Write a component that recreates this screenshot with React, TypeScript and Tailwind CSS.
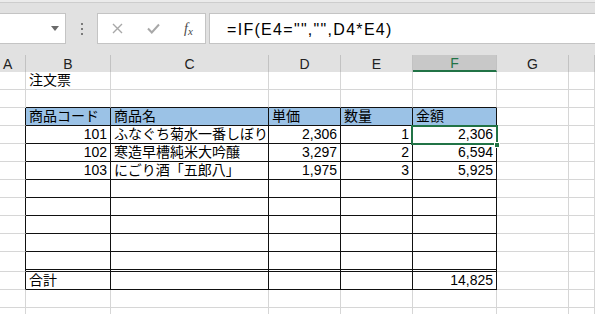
import React from "react";

const FONT = "font-['Liberation_Sans','Noto_Sans_CJK_JP',sans-serif]";

type Cell = { t?: string; r?: boolean };

const colWidths = [26, 85, 158, 72, 72, 84, 72];

const rows: { cells: Cell[]; kind: string }[] = [
  { kind: "plain", cells: [{}, { t: "注文票" }] },
  { kind: "pre", cells: [] },
  {
    kind: "head",
    cells: [{}, { t: "商品コード" }, { t: "商品名" }, { t: "単価" }, { t: "数量" }, { t: "金額" }],
  },
  {
    kind: "tbl",
    cells: [{}, { t: "101", r: true }, { t: "ふなぐち菊水一番しぼり" }, { t: "2,306", r: true }, { t: "1", r: true }, { t: "2,306", r: true }],
  },
  {
    kind: "tbl",
    cells: [{}, { t: "102", r: true }, { t: "寒造早槽純米大吟醸" }, { t: "3,297", r: true }, { t: "2", r: true }, { t: "6,594", r: true }],
  },
  {
    kind: "tbl",
    cells: [{}, { t: "103", r: true }, { t: "にごり酒「五郎八」" }, { t: "1,975", r: true }, { t: "3", r: true }, { t: "5,925", r: true }],
  },
  { kind: "tbl", cells: [] },
  { kind: "tbl", cells: [] },
  { kind: "tbl", cells: [] },
  { kind: "tbl", cells: [] },
  { kind: "last", cells: [] },
  {
    kind: "total",
    cells: [{}, { t: "合計" }, {}, {}, {}, { t: "14,825", r: true }],
  },
  { kind: "plain", cells: [] },
  { kind: "plain", cells: [] },
];

function GridRow({ row }: { row: { cells: Cell[]; kind: string } }) {
  const inTable = ["head", "tbl", "last", "total"].includes(row.kind);
  const h = row.kind === "last" ? "h-[20px]" : "h-[18px]";
  return (
    <div className={`flex ${h}`}>
      {Array.from({ length: 8 }).map((_, ci) => {
        const c = row.cells[ci] || {};
        const tableCol = ci >= 1 && ci <= 5;
        let br = "border-r border-r-[#d6d6d6]";
        let bb = "border-b border-b-[#d6d6d6]";
        if (inTable && ci <= 5) br = "border-r border-r-[#111]";
        if (row.kind === "pre" && tableCol) bb = "border-b border-b-[#111]";
        if (inTable && tableCol) bb = "border-b border-b-[#111]";
        if (row.kind === "last" && tableCol) bb = "border-b-[3px] border-double border-b-[#111]";
        const bg = row.kind === "head" && tableCol ? "bg-[#9bc2e6]" : "bg-white";
        const w = ci < 7 ? colWidths[ci] : undefined;
        return (
          <div
            key={ci}
            className={`${br} ${bb} ${bg} ${ci === 7 ? "flex-1" : "shrink-0"} flex items-end overflow-hidden whitespace-nowrap px-[3px] pb-[1px] text-[14px] leading-[16px] text-black ${c.r ? "justify-end" : "justify-start"}`}
            style={w ? { width: w } : undefined}
          >
            {c.t}
          </div>
        );
      })}
    </div>
  );
}

export default function App() {
  const headers = ["A", "B", "C", "D", "E", "F", "G", ""];
  return (
    <div className={`w-[595px] h-[314px] overflow-hidden bg-white ${FONT}`}>
      {/* toolbar */}
      <div className="bg-[#e1e1e1] h-[55px] flex flex-col">
        <div className="h-[2px] bg-[#ebebeb]" />
        <div className="h-px bg-[#cdcdcd]" />
        <div className="mt-[10px] flex h-[31px]">
          <div className="w-[66px] shrink-0 bg-white border-y border-r border-[#c4c4c4] relative flex items-center justify-end pr-[6px]">
            <svg width="8" height="5" viewBox="0 0 8 5">
              <path d="M0 0 L8 0 L4 5 Z" fill="#6b6b6b" />
            </svg>
          </div>
          <div className="w-[31px] shrink-0 flex flex-col items-center justify-center gap-[3px] pl-[1px]">
            <div className="w-[2px] h-[2px] bg-[#7a7a7a]" />
            <div className="w-[2px] h-[2px] bg-[#7a7a7a]" />
            <div className="w-[2px] h-[2px] bg-[#7a7a7a]" />
          </div>
          <div className="w-[109px] shrink-0 bg-white border border-[#c4c4c4] flex items-center">
            <div className="w-[36px] flex justify-center pl-[2px]">
              <svg width="11" height="11" viewBox="0 0 11 11">
                <path d="M1 1 L10 10 M10 1 L1 10" stroke="#a8a8a8" strokeWidth="1.4" />
              </svg>
            </div>
            <div className="w-[38px] flex justify-center">
              <svg width="13" height="11" viewBox="0 0 13 11">
                <path d="M1 5.5 L4.8 9.5 L12 1.5" stroke="#a8a8a8" strokeWidth="2" fill="none" />
              </svg>
            </div>
            <div className="w-[33px] flex justify-center">
              <span className="font-['Liberation_Serif',serif] italic text-[14px] text-[#4a4a4a] leading-none">
                f<span className="text-[11px] relative top-[2px]">x</span>
              </span>
            </div>
          </div>
          <div className="ml-[3px] flex-1 bg-white border-y border-l border-[#c4c4c4] flex items-center pl-[17px]">
            <span className="text-[16px] tracking-[1.3px] text-black pt-[2px]">=IF(E4="","",D4*E4)</span>
          </div>
        </div>
      </div>
      {/* column headers */}
      <div className="flex h-[17px] bg-[#e1e1e1]">
        {headers.map((h, i) => (
          <div
            key={i}
            className={`${i === 7 ? "flex-1" : "shrink-0"} flex items-center ${i === 0 ? "justify-start pl-[3px]" : "justify-center"} border-r border-[#c2c2c2] text-[14px] leading-none ${
              h === "F" ? "bg-[#c8c8c8] text-[#217346] border-b-2 border-b-[#217346]" : "text-[#222]"
            }`}
            style={i < 7 ? { width: colWidths[i] } : undefined}
          >
            {h}
          </div>
        ))}
      </div>
      {/* grid */}
      <div className="relative">
        {rows.map((r, i) => (
          <GridRow key={i} row={r} />
        ))}
        <div className="absolute left-[411px] top-[53px] w-[87px] h-[20px] border-2 border-[#217346]" />
        <div className="absolute left-[494px] top-[70px] w-[6px] h-[6px] bg-[#217346] border border-white" />
      </div>
    </div>
  );
}
